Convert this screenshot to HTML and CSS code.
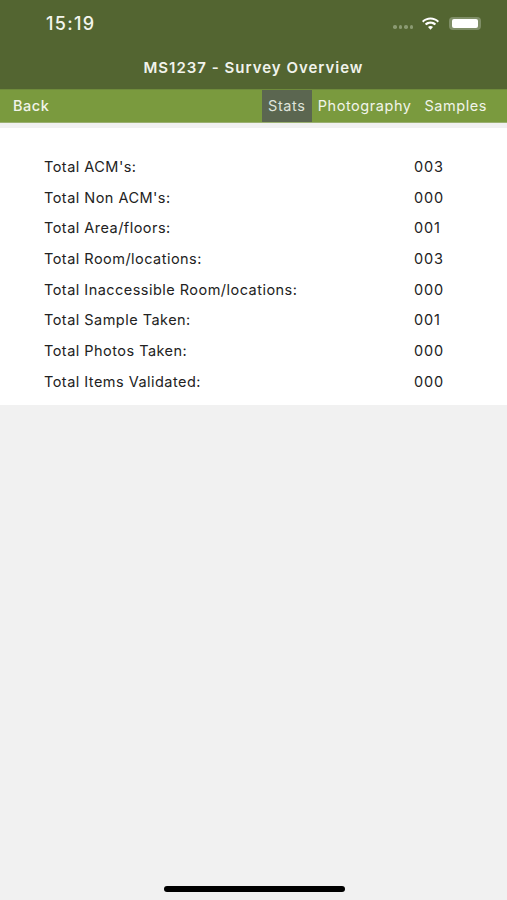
FILE: index.html
```html
<!DOCTYPE html>
<html lang="en">
<head>
<meta charset="utf-8">
<title>Survey Overview</title>
<link rel="stylesheet" href="styles.css">
</head>
<body>
<div class="screen">
  <header class="topbar">
    <div class="status">
      <span class="time">15:19</span>
      <div class="status-icons">
        <span class="signal"><i></i><i></i><i></i><i></i></span>
        <svg class="wifi" width="19" height="14" viewBox="0 0 19 14"><path d="M9.5 2.6c2.7 0 5.2 1 7.1 2.8l1.4-1.5C15.700 1.700 12.700.4 9.500.4S3.300 1.700 1 3.900l1.400 1.500C4.300 3.600 6.800 2.600 9.500 2.600z" fill="#fff"/><path d="M9.500 6.700c1.600 0 3 .6 4.200 1.600l1.400-1.500C13.600 5.400 11.600 4.500 9.500 4.500S5.400 5.400 3.900 6.800l1.400 1.500c1.200-1 2.600-1.600 4.200-1.600z" fill="#fff"/><path d="M9.500 8.900c-1 0-1.900.4-2.500 1l2.500 2.900 2.500-2.900c-.6-.6-1.500-1-2.500-1z" fill="#fff"/></svg>
        <span class="battery"><span class="battery-fill"></span></span>
      </div>
    </div>
    <h1 class="title">MS1237 - Survey Overview</h1>
  </header>
  <nav class="tabs">
    <a class="back">Back</a>
    <div class="tab-group">
      <a class="tab active">Stats</a>
      <a class="tab">Photography</a>
      <a class="tab">Samples</a>
    </div>
  </nav>
  <div class="gap"></div>
  <main class="stats">
    <div class="row"><span>Total ACM's:</span><span class="val">003</span></div>
    <div class="row"><span>Total Non ACM's:</span><span class="val">000</span></div>
    <div class="row"><span>Total Area/floors:</span><span class="val">001</span></div>
    <div class="row"><span>Total Room/locations:</span><span class="val">003</span></div>
    <div class="row"><span>Total Inaccessible Room/locations:</span><span class="val">000</span></div>
    <div class="row"><span>Total Sample Taken:</span><span class="val">001</span></div>
    <div class="row"><span>Total Photos Taken:</span><span class="val">000</span></div>
    <div class="row"><span>Total Items Validated:</span><span class="val">000</span></div>
  </main>
  <div class="home-bar"></div>
</div>
</body>
</html>
```
FILE: styles.css
```css
* { box-sizing: border-box; }
html, body { margin: 0; padding: 0; }
body { background: #f1f1f1; font-family: "Inter", "Liberation Sans", sans-serif; }
.screen { position: relative; width: 507px; height: 900px; overflow: hidden; background: #f1f1f1; }
.topbar { height: 89px; background: #536531; color: #fff; display: flex; flex-direction: column; }
.status { height: 46px; padding: 0 26px 0 46px; display: flex; align-items: center; justify-content: space-between; }
.time { font-size: 18px; font-weight: 500; color: #f3f5ee; padding-top: 1px; letter-spacing: 1.3px; }
.status-icons { display: flex; align-items: center; gap: 9px; }
.signal { display: flex; gap: 2px; margin-top: 8px; }
.signal i { width: 3.500px; height: 3.500px; border-radius: 50%; background: #8b9a72; }
.wifi { margin-top: 1px; margin-left: -1px; }
.battery { width: 32px; height: 13px; padding: 2px 3px; border-radius: 4px; background: #7f8e67; display: flex; }
.battery-fill { flex: 1; background: #fff; border-radius: 2px; }
.title { margin: 0; padding-top: 12px; text-align: center; font-size: 15px; font-weight: 600; color: #f1f3ec; letter-spacing: 1px; }
.tabs { height: 34px; background: #7a9a3e; display: flex; justify-content: space-between; color: #f1f4ea; font-size: 14.500px; border-top: 1px solid #6f8b3c; border-bottom: 1px solid #9bb071; letter-spacing: .55px; }
.back { display: flex; align-items: center; padding-left: 13px; padding-bottom: 2px; font-weight: 500; }
.tab-group { display: flex; padding-right: 20px; gap: 6px; }
.tab { display: flex; align-items: center; padding-bottom: 2px; }
.tab + .tab + .tab { margin-left: 7px; }
.tab.active { background: #5b6650; color: #dfe3da; width: 50px; justify-content: center; }
.gap { height: 5px; background: #f1f1f1; }
.stats { background: #fff; height: 277px; padding: 23px 64px 0 44px; font-size: 14.500px; color: #222; letter-spacing: .47px; }
.row { height: 30.700px; display: flex; justify-content: space-between; align-items: center; }
.val { width: 29px; letter-spacing: .8px; white-space: nowrap; }
.home-bar { position: absolute; left: 164px; top: 886px; width: 181px; height: 6px; border-radius: 3px; background: #000; }
```
